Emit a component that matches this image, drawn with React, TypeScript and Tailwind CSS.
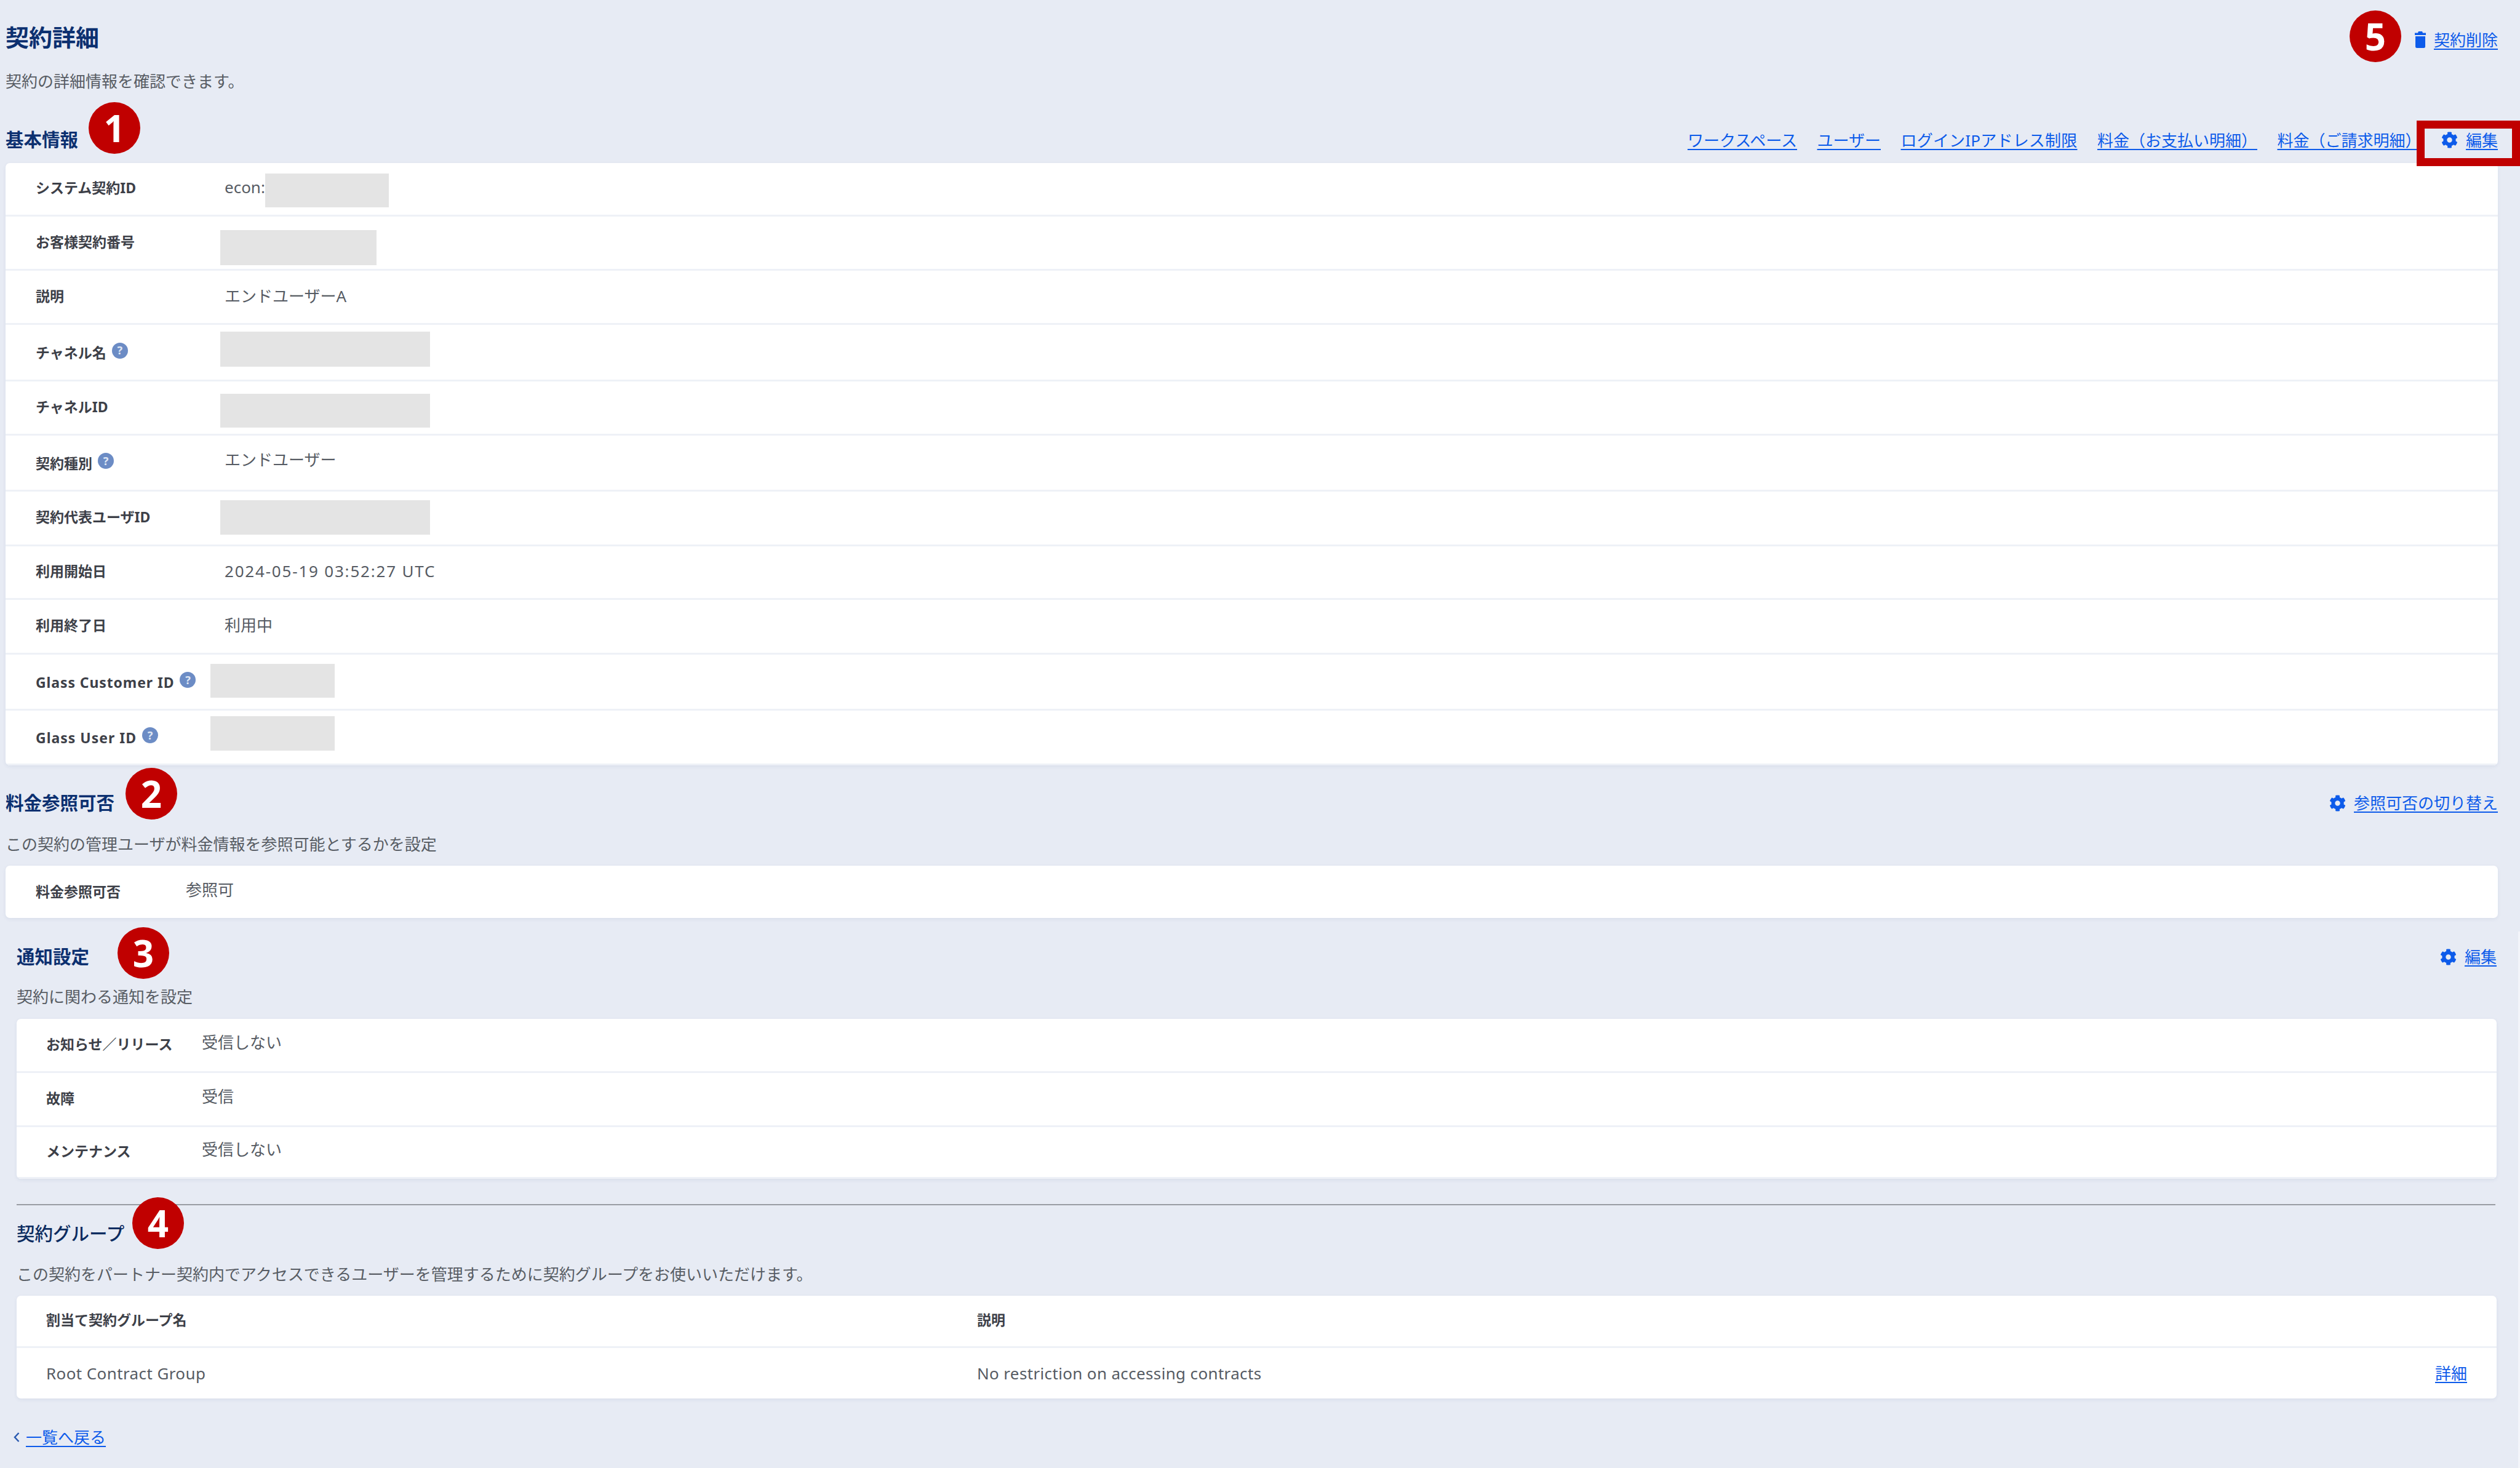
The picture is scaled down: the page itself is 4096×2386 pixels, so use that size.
import React from "react";
import { FaCog } from "react-icons/fa";

const linkClass =
  "text-[26px] leading-[40px] text-[#0d5bea] underline underline-offset-[4px] decoration-2 whitespace-nowrap";
const cardClass =
  "bg-white rounded-[7px] shadow-[0_2px_6px_rgba(30,50,110,0.07)] overflow-hidden";
const rowClass = "flex items-center border-b-[3px] border-[#eef1f7] pb-[3px]";
const labelClass = "text-[23px] font-bold text-[#3d4048] whitespace-nowrap";
const valueClass = "text-[26px] text-[#565b63] whitespace-nowrap";
const headingClass = "text-[29.5px] font-bold text-[#0c3070] whitespace-nowrap";
const subClass = "h-[40px] flex items-center text-[26px] text-[#585d64] whitespace-nowrap";

function Badge({ n, className }: { n: number; className: string }) {
  return (
    <div
      className={
        "absolute w-[84px] h-[84px] rounded-full bg-[#c00000] text-white flex items-center justify-center text-[60px] font-bold font-['Open_Sans',sans-serif] " +
        className
      }
    >
      {n}
    </div>
  );
}

function Help() {
  return (
    <span className="ml-[9px] -translate-y-[4px] w-[26px] h-[26px] rounded-full bg-[#6c8cc5] text-[#dfe6f4] text-[18px] font-bold flex items-center justify-center shrink-0">
      ?
    </span>
  );
}

function Redacted({ className }: { className: string }) {
  return <div className={"bg-[#e4e4e4] shrink-0 " + className}></div>;
}

function GearLink({ text }: { text: string }) {
  return (
    <div className="flex items-center gap-[13px]">
      <FaCog className="w-[27px] h-[27px] text-[#0d5bea]" />
      <a className={linkClass}>{text}</a>
    </div>
  );
}

function TrashIcon() {
  return (
    <svg viewBox="0 0 18 27" className="w-[18px] h-[27px] text-[#0d5bea]" fill="currentColor">
      <path d="M6 0h6l1 2.500h5V6H0V2.500h5z" />
      <path d="M1 8h16v16.500a2.500 2.500 0 0 1-2.500 2.500h-11A2.500 2.500 0 0 1 1 24.500z" />
    </svg>
  );
}

function BasicRow({
  label,
  help,
  h,
  last,
  labelExtra = "",
  children,
}: {
  label: string;
  help?: boolean;
  h: string;
  last?: boolean;
  labelExtra?: string;
  children: React.ReactNode;
}) {
  return (
    <div className={h + " " + rowClass + (last ? " border-b-0" : "")}>
      <div className={"w-[349px] pl-[49px] flex items-center shrink-0" + (help ? " mt-[5px]" : "")}>
        <span className={labelClass + " " + labelExtra}>{label}</span>
        {help && <Help />}
      </div>
      {children}
    </div>
  );
}

function Value({ className = "", children }: { className?: string; children: React.ReactNode }) {
  return <span className={valueClass + " pl-[7px] " + className}>{children}</span>;
}

export default function App() {
  return (
    <div className="relative w-[4096px] h-[2386px] overflow-hidden bg-[#e7ebf4] font-['Noto_Sans','Noto_Sans_CJK_JP',sans-serif]">
      {/* page header */}
      <div className="pl-[9px] pr-[36px]">
        <div className="h-[112px] pt-[8px] flex items-center justify-between">
          <h1 className="text-[38px] font-bold text-[#0c3070]">契約詳細</h1>
          <div className="flex items-center gap-[13px] mt-[9px]">
            <TrashIcon />
            <a className={linkClass}>契約削除</a>
          </div>
        </div>
        <div className={subClass}>契約の詳細情報を確認できます。</div>

        {/* basic info */}
        <div className="mt-[38px] h-[75px] flex items-center justify-between">
          <h2 className={headingClass}>基本情報</h2>
          <div className="flex items-center gap-[32.500px]">
            <a className={linkClass}>ワークスペース</a>
            <a className={linkClass}>ユーザー</a>
            <a className={linkClass + " tracking-[0.2px]"}>ログインIPアドレス制限</a>
            <a className={linkClass}>料金（お支払い明細）</a>
            <a className={linkClass}>料金（ご請求明細）</a>
            <GearLink text="編集" />
          </div>
        </div>
        <div className={cardClass}>
          <BasicRow label="システム契約ID" h="h-[87px]">
            <Value className="w-[73px] -mt-[3px]">econ:</Value>
            <Redacted className="w-[201px] h-[55px] mt-[8px]" />
          </BasicRow>
          <BasicRow label="お客様契約番号" h="h-[88px]">
            <Redacted className="w-[254px] h-[57px] mt-[18px]" />
          </BasicRow>
          <BasicRow label="説明" h="h-[88px]">
            <Value>エンドユーザーA</Value>
          </BasicRow>
          <BasicRow label="チャネル名" help h="h-[92px]">
            <Redacted className="w-[341px] h-[57px] -mt-[8px]" />
          </BasicRow>
          <BasicRow label="チャネルID" h="h-[88px]">
            <Redacted className="w-[341px] h-[55px] mt-[13px]" />
          </BasicRow>
          <BasicRow label="契約種別" help h="h-[91px]">
            <Value className="-mt-[7px]">エンドユーザー</Value>
          </BasicRow>
          <BasicRow label="契約代表ユーザID" h="h-[89px]">
            <Redacted className="w-[341px] h-[56px]" />
          </BasicRow>
          <BasicRow label="利用開始日" h="h-[87px]">
            <Value className="tracking-[1.8px]">2024-05-19 03:52:27 UTC</Value>
          </BasicRow>
          <BasicRow label="利用終了日" h="h-[89px]">
            <Value>利用中</Value>
          </BasicRow>
          <BasicRow label="Glass Customer ID" labelExtra="tracking-[0.9px]" help h="h-[91px]">
            <Redacted className="w-[202px] h-[55px] -ml-[16px]" />
          </BasicRow>
          <BasicRow label="Glass User ID" labelExtra="tracking-[1px]" help h="h-[89px]" last>
            <Redacted className="w-[202px] h-[56px] -ml-[16px] -mt-[10px]" />
          </BasicRow>
        </div>

        {/* billing visibility */}
        <div className="h-[108px] pt-[14px] flex items-center justify-between">
          <h2 className={headingClass}>料金参照可否</h2>
          <GearLink text="参照可否の切り替え" />
        </div>
        <div className={subClass}>この契約の管理ユーザが料金情報を参照可能とするかを設定</div>
        <div className={cardClass + " mt-[15px] h-[85px] flex items-center pl-[49px]"}>
          <span className={labelClass + " w-[244px]"}>料金参照可否</span>
          <span className={valueClass + " -mt-[6px]"}>参照可</span>
        </div>
      </div>

      <div className="pl-[27px] pr-[38px]">
        {/* notification settings */}
        <div className="h-[108px] pt-[18px] flex items-center justify-between">
          <h2 className={headingClass}>通知設定</h2>
          <GearLink text="編集" />
        </div>
        <div className={subClass}>契約に関わる通知を設定</div>
        <div className={cardClass + " mt-[16px]"}>
          {[
            ["お知らせ／リリース", "受信しない", "h-[88px]"],
            ["故障", "受信", "h-[88px]"],
            ["メンテナンス", "受信しない", "h-[84px]"],
          ].map(([label, value, h], i) => (
            <div key={label} className={h + " " + rowClass + (i === 2 ? " border-b-0" : "")}>
              <span className={labelClass + " w-[301px] pl-[48px]"}>{label}</span>
              <span className={valueClass + " -mt-[6px]"}>{value}</span>
            </div>
          ))}
        </div>

        <div className="mt-[41px] h-[2px] bg-[#999ca3] mr-[2px]"></div>

        {/* contract groups */}
        <div className="h-[92px] flex items-center">
          <h2 className="text-[29.5px] font-medium text-[#0c2c60] whitespace-nowrap">契約グループ</h2>
        </div>
        <div className={subClass}>
          この契約をパートナー契約内でアクセスできるユーザーを管理するために契約グループをお使いいただけます。
        </div>
        <div className={cardClass + " mt-[15px]"}>
          <div className={"h-[85px] " + rowClass}>
            <span className={labelClass + " w-[1561px] pl-[48px]"}>割当て契約グループ名</span>
            <span className={labelClass}>説明</span>
          </div>
          <div className="h-[82px] flex items-center pr-[48px]">
            <span className={valueClass + " w-[1561px] pl-[48px] tracking-[0.4px]"}>Root Contract Group</span>
            <span className={valueClass + " flex-1 tracking-[0.35px]"}>No restriction on accessing contracts</span>
            <a className={linkClass}>詳細</a>
          </div>
        </div>

        <div className="mt-[43px] h-[40px] -ml-[5px] flex items-center gap-[10px]">
          <svg viewBox="0 0 10 18" className="w-[10px] h-[18px] text-[#2a5ab0]" fill="none" stroke="currentColor" strokeWidth="2.5">
            <path d="M8.500 2 2 9l6.500 7" />
          </svg>
          <a className={linkClass}>一覧へ戻る</a>
        </div>
      </div>

      {/* annotations over the screenshot */}
      <Badge n={1} className="left-[144px] top-[166px]" />
      <Badge n={2} className="left-[204px] top-[1248px]" />
      <Badge n={3} className="left-[191px] top-[1507px]" />
      <Badge n={4} className="left-[215px] top-[1946px]" />
      <Badge n={5} className="left-[3819px] top-[17px]" />
      <div className="absolute left-[3928px] top-[196px] w-[168px] h-[74px] border-[13px] border-[#c00000]"></div>
      <div className="absolute right-0 top-[1514px] bottom-0 w-[3px] bg-[#f3f5fa]"></div>
    </div>
  );
}
